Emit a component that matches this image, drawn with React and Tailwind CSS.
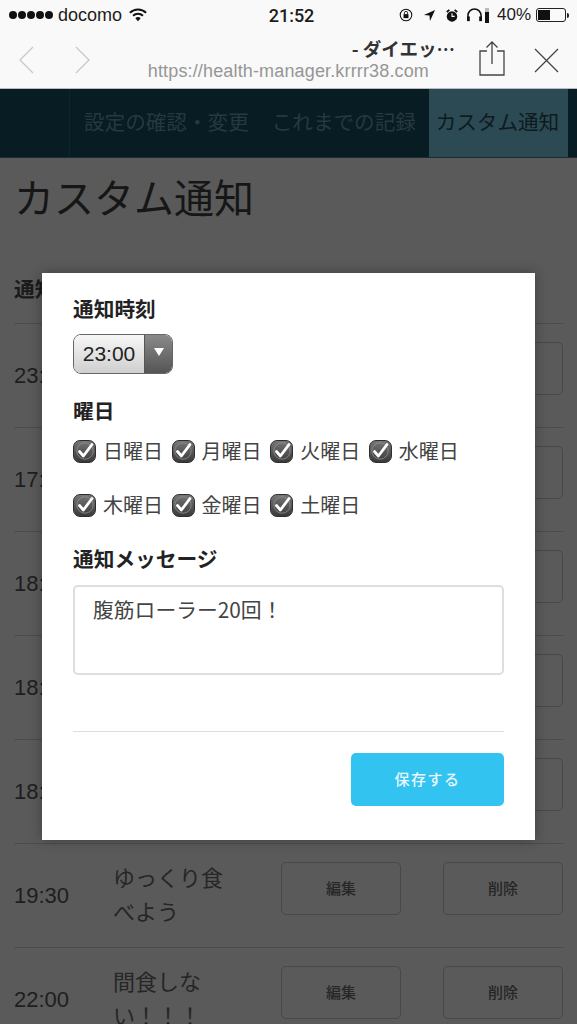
const JP = "font-['Noto_Sans_CJK_JP','Liberation_Sans',sans-serif]"

const ROWS = [
  { time: '23:00' },
  { time: '17:00' },
  { time: '18:00' },
  { time: '18:30' },
  { time: '18:45' },
  { time: '19:30', lines: ['ゆっくり食', 'べよう'] },
  { time: '22:00', lines: ['間食しな', 'い！！！'] },
]

const DAYS = [
  ['日曜日', '月曜日', '火曜日', '水曜日'],
  ['木曜日', '金曜日', '土曜日'],
]

function Check() {
  return (
    <span className="flex h-[23px] w-[23px] shrink-0 items-center justify-center rounded-[7px] border-[1.5px] border-[#2e2e2e] bg-gradient-to-b from-[#777] to-[#3a3a3a]">
      <svg viewBox="0 0 20 20" className="h-[20px] w-[20px]">
        <circle cx="10" cy="10" r="8.2" fill="none" stroke="#8f8f8f" strokeWidth="0.8" />
        <path d="M4.5 10.5 L8.4 15 L17 3.5" fill="none" stroke="#fff" strokeWidth="2.8" strokeLinecap="round" strokeLinejoin="round" />
      </svg>
    </span>
  )
}

function StatusBar() {
  return (
    <div className="flex h-[30px] items-center bg-[#f9f9f9] px-[8px] text-[#1c1c1c]">
      <div className="flex flex-1 items-center font-['Liberation_Sans',sans-serif] text-[18px]">
        <div className="ml-[1px] flex gap-[1px]">
          {[0, 1, 2, 3, 4].map((i) => (
            <span key={i} className="h-[8px] w-[8px] rounded-full bg-[#111]" />
          ))}
        </div>
        <span className="ml-[5px]">docomo</span>
        <svg viewBox="0 0 20 15" className="ml-[7px] h-[14px] w-[18px]">
          <path d="M1 5 A13 13 0 0 1 19 5" fill="none" stroke="#111" strokeWidth="2.2" />
          <path d="M4.5 8.3 A8 8 0 0 1 15.5 8.3" fill="none" stroke="#111" strokeWidth="2.2" />
          <path d="M7 11 L10 14.5 L13 11 A4.5 4.5 0 0 0 7 11 Z" fill="#111" />
        </svg>
      </div>
      <span className="ml-[6px] font-['Roboto',sans-serif] text-[18px] font-medium">21:52</span>
      <div className="flex flex-1 items-center justify-end font-['Liberation_Sans',sans-serif] text-[17px]">
        <svg viewBox="0 0 16 16" className="h-[14px] w-[14px]">
          <circle cx="8" cy="8" r="6.6" fill="none" stroke="#111" strokeWidth="1.2" />
          <rect x="5.2" y="7" width="5.6" height="4.6" fill="#111" />
          <path d="M6.2 7 V5.6 A1.8 1.8 0 0 1 9.8 5.6 V7" fill="none" stroke="#111" strokeWidth="1" />
        </svg>
        <svg viewBox="0 0 14 14" className="ml-[10px] h-[13px] w-[13px]">
          <path d="M13 1 L1 6.5 L7 7 L7.5 13 Z" fill="#111" />
        </svg>
        <svg viewBox="0 0 16 16" className="ml-[9px] h-[15px] w-[14px]">
          <circle cx="8" cy="9" r="6" fill="#111" />
          <path d="M2 4 L5 1.5 M14 4 L11 1.5" stroke="#111" strokeWidth="2" />
          <path d="M8 5.5 V9 H11" stroke="#fff" strokeWidth="1.2" fill="none" />
        </svg>
        <svg viewBox="0 0 18 16" className="ml-[7px] h-[15px] w-[17px]">
          <path d="M2 13 V8 A7 7 0 0 1 16 8 V13" fill="none" stroke="#111" strokeWidth="1.6" />
          <rect x="1" y="9" width="3" height="5" fill="#111" />
          <rect x="14" y="9" width="3" height="5" fill="#111" />
        </svg>
        <span className="ml-[2px] h-[15px] w-[4px] bg-gradient-to-b from-[#bbb] from-30% to-[#111] to-30%" />
        <span className="ml-[8px]">40%</span>
        <span className="ml-[5px] flex h-[14px] w-[30px] rounded-[3px] border border-[#222] p-[1px]">
          <span className="h-full w-[12px] bg-[#111]" />
        </span>
        <span className="ml-[1px] h-[5px] w-[2px] rounded-r bg-[#222]" />
      </div>
    </div>
  )
}

function BrowserBar() {
  return (
    <div className="flex h-[59px] items-start border-b border-[#b9bcc0] bg-[#f9f9f9]">
      <div className="flex w-[120px] pl-[18px] pt-[16px]">
        <svg viewBox="0 0 16 28" className="h-[28px] w-[16px]">
          <path d="M15 1 L2 14 L15 27" fill="none" stroke="#c8c8ca" strokeWidth="1.3" />
        </svg>
        <svg viewBox="0 0 16 28" className="ml-[41px] h-[28px] w-[16px]">
          <path d="M1 1 L14 14 L1 27" fill="none" stroke="#c8c8ca" strokeWidth="1.3" />
        </svg>
      </div>
      <div className="flex w-[335px] flex-col items-end">
        <span className={`${JP} mt-[7px] text-[18.5px] font-bold leading-[22px] text-[#333]`}>- ダイエッ…</span>
        <span className="mr-[26px] mt-[2px] font-['Liberation_Sans',sans-serif] text-[18px] leading-[20px] tracking-[0.15px] text-[#969696]">https://health-manager.krrrr38.com</span>
      </div>
      <svg viewBox="0 0 28 37" className="ml-[23px] mt-[10px] h-[37px] w-[28px]">
        <path d="M9 11 H2 V35 H26 V11 H19 M14 24 V2 M8.5 7.5 L14 2 L19.5 7.5" fill="none" stroke="#444" strokeWidth="1.3" />
      </svg>
      <svg viewBox="0 0 25 25" className="ml-[28px] mt-[18px] h-[25px] w-[25px]">
        <path d="M1 1 L24 24 M24 1 L1 24" fill="none" stroke="#444" strokeWidth="1.3" />
      </svg>
    </div>
  )
}

function Nav() {
  return (
    <div className={`${JP} flex h-[69px] items-center border-b border-[#1d2b30] bg-[#081c24] text-[20.6px]`}>
      <div className="h-full w-[70px] border-r border-[#0c2630]" />
      <span className="mb-[3px] ml-[14px] text-[#26393f]">設定の確認・変更</span>
      <span className="mb-[3px] ml-[23px] text-[#26393f]">これまでの記録</span>
      <div className="ml-[13px] flex h-full w-[139px] items-center justify-center bg-[#2b4a54] pb-[3px] pr-[2px] text-[#0e1a1e]">カスタム通知</div>
    </div>
  )
}

// the first rows sit behind the dialog, only their outlines show
function Row({ time, lines }) {
  return (
    <div className="flex h-[104px] items-center border-t border-[#4c4c4c]">
      <span className="w-[99px] font-['Liberation_Sans',sans-serif] text-[22px] text-[#1e1e1e]">{time}</span>
      <div className={`${JP} w-[168px] pb-[6px] text-[22px] leading-[34px] text-[#262626]`}>
        {lines?.map((l) => <div key={l}>{l}</div>)}
      </div>
      <button className={`${JP} mt-[-14px] h-[53px] w-[120px] rounded-[5px] border border-[#484848] text-[15px] font-medium text-[#262626]`}>{lines && '編集'}</button>
      <button className={`${JP} ml-[42px] mt-[-14px] h-[53px] w-[120px] rounded-[5px] border border-[#484848] text-[15px] font-medium text-[#262626]`}>{lines && '削除'}</button>
    </div>
  )
}

function Modal() {
  return (
    <div className={`${JP} absolute left-[42px] top-[273px] h-[567px] w-[493px] bg-white px-[31px] pt-[21px] text-[#222] shadow-[0_0_12px_rgba(0,0,0,0.3)]`}>
      <h3 className="text-[20.7px] font-bold leading-[28px]">通知時刻</h3>
      <div className="mt-[12px] flex h-[40px] w-[100px] overflow-hidden rounded-[8px] border border-[#666]">
        <div className="flex flex-1 items-center justify-center bg-gradient-to-b from-[#f7f7f7] to-[#cfcfcf] font-['Liberation_Sans',sans-serif] text-[21px] text-[#222]">23:00</div>
        <div className="flex w-[28px] items-center justify-center border-l border-[#555] bg-gradient-to-b from-[#8a8a8a] to-[#555]">
          <span className="mb-[4px] h-0 w-0 border-x-[5px] border-t-[8px] border-x-transparent border-t-white" />
        </div>
      </div>
      <h3 className="mt-[22px] text-[20.7px] font-bold leading-[28px]">曜日</h3>
      <div className="mt-[13px] flex flex-col gap-[26px]">
        {DAYS.map((row, i) => (
          <div key={i} className="flex h-[28px] items-center gap-[8.6px]">
            {row.map((d) => (
              <label key={d} className="flex items-center gap-[7px] whitespace-nowrap text-[20px] text-[#444]">
                <Check />
                <span className="w-[60px]">{d}</span>
              </label>
            ))}
          </div>
        ))}
      </div>
      <h3 className="mt-[25px] text-[20.7px] font-bold leading-[28px]">通知メッセージ</h3>
      <div className="mt-[13px] h-[90px] w-[431px] rounded-[5px] border-2 border-[#dedede] px-[18px] pt-[8px] text-[20.8px] leading-[28px] text-[#444]">腹筋ローラー20回！</div>
      <div className="mt-[56px] w-[431px] border-t border-[#dedede]" />
      <div className="mt-[21px] flex w-[431px] justify-end">
        <button className="h-[53px] w-[153px] rounded-[5px] bg-[#33c3f0] text-[15px] font-medium tracking-[1.5px] text-[#e8f8fe]">保存する</button>
      </div>
    </div>
  )
}

export default function App() {
  return (
    <div className="relative h-[1024px] w-[577px] overflow-hidden bg-[#5a5a5a]">
      <StatusBar />
      <BrowserBar />
      <Nav />
      <main className="px-[14px]">
        <h1 className={`${JP} mt-[12px] text-[40px] leading-[52px] text-[#161616]`}>カスタム通知</h1>
        <div className={`${JP} mt-[51px] h-[50px] text-[20.7px] font-bold text-[#1a1a1a]`}>通知時刻</div>
        {ROWS.map((r) => <Row key={r.time} {...r} />)}
      </main>
      <Modal />
    </div>
  )
}
